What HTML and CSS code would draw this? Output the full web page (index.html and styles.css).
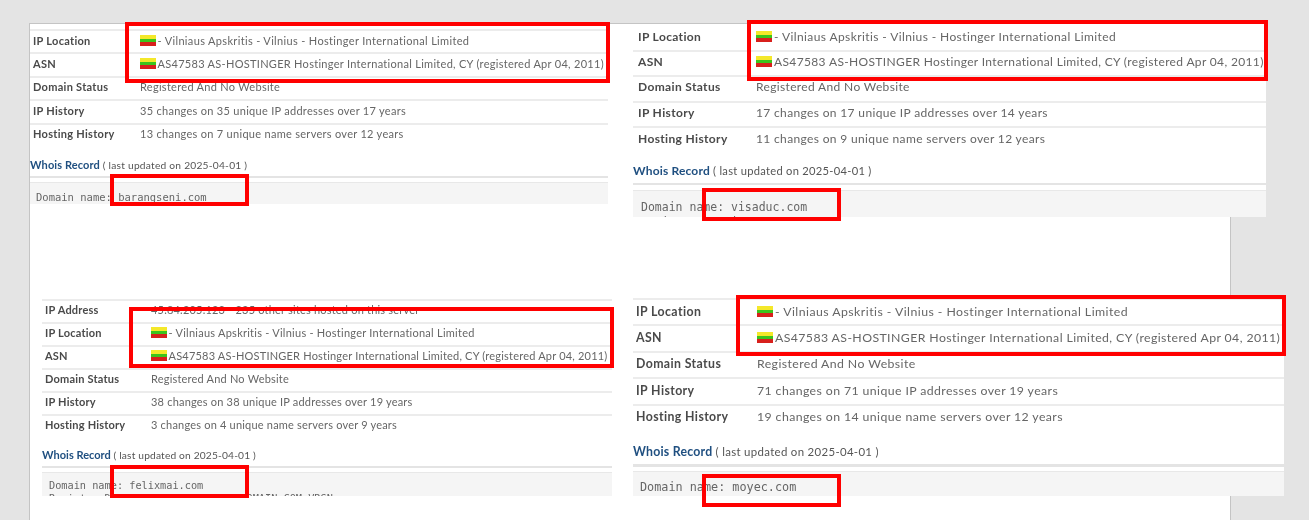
FILE: index.html
```html
<!DOCTYPE html>
<html lang="en">
<head>
  <meta charset="UTF-8">
  <meta name="viewport" content="width=device-width, initial-scale=1.0">
  <title>Whois comparison</title>
  <link rel="stylesheet" href="styles.css">
</head>
<body>
  <div class="sheet"></div>

  <!-- barangseni.com -->
  <section class="shot shot-a">
    <div class="row"><b>IP Location</b><span class="place"><i class="flag"></i>- Vilniaus Apskritis - Vilnius - Hostinger International Limited</span></div>
    <div class="row"><b>ASN</b><span><i class="flag"></i>AS47583 AS-HOSTINGER Hostinger International Limited, CY (registered Apr 04, 2011)</span></div>
    <div class="row"><b>Domain Status</b><span>Registered And No Website</span></div>
    <div class="row"><b>IP History</b><span>35 changes on 35 unique IP addresses over 17 years</span></div>
    <div class="row"><b>Hosting History</b><span>13 changes on 7 unique name servers over 12 years</span></div>
    <h2><a href="#">Whois Record</a> ( last updated on 2025-04-01 )</h2>
    <pre>Domain name: barangseni.com</pre>
  </section>

  <!-- felixmai.com -->
  <section class="shot shot-c">
    <div class="row"><b>IP Address</b><span>45.84.205.123 - 235 other sites hosted on this server</span></div>
    <div class="row"><b>IP Location</b><span class="place"><i class="flag"></i>- Vilniaus Apskritis - Vilnius - Hostinger International Limited</span></div>
    <div class="row"><b>ASN</b><span><i class="flag"></i>AS47583 AS-HOSTINGER Hostinger International Limited, CY (registered Apr 04, 2011)</span></div>
    <div class="row"><b>Domain Status</b><span>Registered And No Website</span></div>
    <div class="row"><b>IP History</b><span>38 changes on 38 unique IP addresses over 19 years</span></div>
    <div class="row"><b>Hosting History</b><span>3 changes on 4 unique name servers over 9 years</span></div>
    <h2><a href="#">Whois Record</a> ( last updated on 2025-04-01 )</h2>
    <pre>Domain name: felixmai.com
Registry Domain ID: 2814415257_DOMAIN_COM-VRSN</pre>
  </section>

  <!-- visaduc.com -->
  <section class="shot shot-b">
    <div class="row"><b>IP Location</b><span class="place"><i class="flag"></i>- Vilniaus Apskritis - Vilnius - Hostinger International Limited</span></div>
    <div class="row"><b>ASN</b><span><i class="flag"></i>AS47583 AS-HOSTINGER Hostinger International Limited, CY (registered Apr 04, 2011)</span></div>
    <div class="row"><b>Domain Status</b><span>Registered And No Website</span></div>
    <div class="row"><b>IP History</b><span>17 changes on 17 unique IP addresses over 14 years</span></div>
    <div class="row"><b>Hosting History</b><span>11 changes on 9 unique name servers over 12 years</span></div>
    <h2><a href="#">Whois Record</a> ( last updated on 2025-04-01 )</h2>
    <pre>Domain name: visaduc.com
Registry Domain ID: 2444415257_DOMAIN_COM-VRSN</pre>
  </section>

  <!-- moyec.com -->
  <section class="shot shot-d">
    <div class="row"><b>IP Location</b><span class="place"><i class="flag"></i>- Vilniaus Apskritis - Vilnius - Hostinger International Limited</span></div>
    <div class="row"><b>ASN</b><span><i class="flag"></i>AS47583 AS-HOSTINGER Hostinger International Limited, CY (registered Apr 04, 2011)</span></div>
    <div class="row"><b>Domain Status</b><span>Registered And No Website</span></div>
    <div class="row"><b>IP History</b><span>71 changes on 71 unique IP addresses over 19 years</span></div>
    <div class="row"><b>Hosting History</b><span>19 changes on 14 unique name servers over 12 years</span></div>
    <h2><a href="#">Whois Record</a> ( last updated on 2025-04-01 )</h2>
    <pre>Domain name: moyec.com</pre>
  </section>

  <!-- red marks drawn over the pasted shots -->
  <div class="mark mark-a1"></div>
  <div class="mark mark-a2"></div>
  <div class="mark mark-b1"></div>
  <div class="mark mark-b2"></div>
  <div class="mark mark-c1"></div>
  <div class="mark mark-c2"></div>
  <div class="mark mark-d1"></div>
  <div class="mark mark-d2"></div>
</body>
</html>
```

FILE: styles.css
```css
* { box-sizing: border-box; }
html, body { height: 100%; }
body { margin: 0; background: #e4e4e4; overflow: hidden; position: relative; font-family: Lato, "Open Sans", sans-serif; color: #666; }

/* the page all four shots are pasted on */
.sheet { position: absolute; left: 29px; top: 23px; width: 1202px; height: 497px; background: #fff; border: 1px solid #c4c4c4; border-bottom: 0; }

.shot { position: absolute; overflow: hidden; background: #fff; font-size: var(--size); letter-spacing: var(--track); filter: blur(0.3px); }
.shot-a { --size: 11px; --track: 0.29px; --row: 23.4px; --lift: 3px; --label: 107px; --mono: 10.5px; --head: 12px; --gap: 4px; --pad-top: 8px; --pad-left: 6px; --flag-gap: 1.5px; left: 30px; top: 29px; width: 578px; height: 175px; }
.shot-b { --size: 12px; --track: 0.35px; --row: 25.6px; --lift: 4px; --label: 118px; --mono: 11.5px; --head: 11.5px; --gap: 5px; --pad-top: 9px; --pad-left: 8px; --flag-gap: 2px; left: 633px; top: 24px; width: 633px; height: 193px; }
.shot-c { --size: 11px; --track: 0.2px; --row: 23px; --lift: 5px; --label: 106px; --mono: 10.25px; --head: 11px; --gap: 4px; --pad-top: 6px; --pad-left: 7px; --flag-gap: 1.5px; left: 42px; top: 299px; width: 570px; height: 197px; }
.shot-d { --size: 12.3px; --track: 0.4px; --row: 26.4px; --lift: 2px; --label: 121px; --mono: 11.8px; --head: 14px; --gap: 4px; --pad-top: 8px; --pad-left: 7px; --flag-gap: 2px; left: 633px; top: 298px; width: 651px; height: 198px; }

.row { display: flex; align-items: center; height: var(--row); border-top: 2px solid #ececec; padding: 0 0 var(--lift) 3px; white-space: nowrap; }
.shot-b .row { padding-left: 5px; }
.shot-b .row:first-child { border-top: 0; padding-bottom: 1px; }
.row b { width: var(--label); flex: none; font-weight: 700; color: #4a4a4a; }
.row span { display: flex; align-items: center; white-space: pre; }
.row .place { letter-spacing: calc(var(--track) + 0.05px); }

.flag { display: block; flex: none; width: 16px; height: 11px; margin-right: var(--flag-gap); background: linear-gradient(#f4e82a 0 33%, #3cc41c 33% 66%, #d8201c 66%); }

.shot h2 { margin: 0; padding: var(--head) 0 5px; border-bottom: 2px solid #e4e4e4; font-size: calc(var(--size) * 0.93); font-weight: 400; letter-spacing: calc(var(--track) * 0.8); color: #555; white-space: nowrap; }
.shot-d h2 { border-bottom-width: 3px; }
.shot h2 a { color: #1f4f80; font-size: var(--size); font-weight: 700; letter-spacing: calc(var(--track) - 0.18px); text-decoration: none; }

.shot pre { margin: var(--gap) 0 0; padding: var(--pad-top) var(--pad-left); background: #f5f5f5; border-top: 1px solid #e8e8e8; font-family: "DejaVu Sans Mono", "Liberation Mono", monospace; font-size: var(--mono); letter-spacing: 0; line-height: 1.27; color: #666; height: 40px; overflow: hidden; }

.mark { position: absolute; border: 4px solid #f00; }
.mark-a1 { left: 125px; top: 22px; width: 485px; height: 61px; }
.mark-a2 { left: 110px; top: 174px; width: 139px; height: 32px; }
.mark-b1 { left: 747px; top: 20px; width: 521px; height: 61px; }
.mark-b2 { left: 702px; top: 188px; width: 139px; height: 33px; }
.mark-c1 { left: 129px; top: 307px; width: 485px; height: 61px; }
.mark-c2 { left: 110px; top: 465px; width: 139px; height: 33px; }
.mark-d1 { left: 736px; top: 295px; width: 550px; height: 61px; }
.mark-d2 { left: 702px; top: 474px; width: 139px; height: 33px; }
```
